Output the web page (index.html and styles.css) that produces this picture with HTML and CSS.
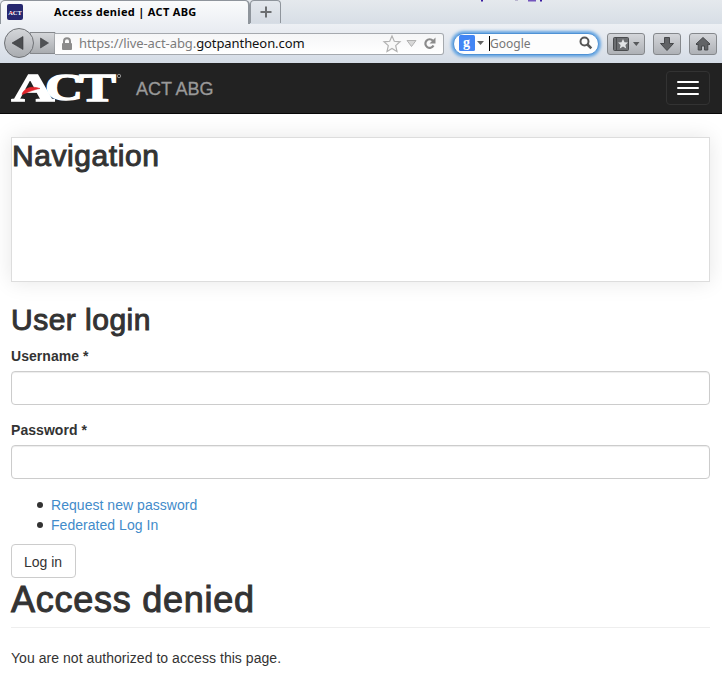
FILE: index.html
```html
<!DOCTYPE html>
<html lang="en">
<head>
<meta charset="utf-8">
<title>Access denied | ACT ABG</title>
<link rel="stylesheet" href="styles.css">
</head>
<body>
<div class="browser">
  <div class="tabs">
    <div class="tab">
      <svg class="favicon" width="16" height="16" viewBox="0 0 16 16"><rect width="16" height="16" rx="2" fill="#26286f"/><text x="1.2" y="10.500" textLength="13.6" lengthAdjust="spacingAndGlyphs" class="logo-text" font-size="7">ACT</text><path d="M3 9l3-.6" stroke="#e33" stroke-width=".8"/></svg>
      <span class="tab-title">Access denied | ACT ABG</span>
    </div>
    <div class="newtab"><svg width="12" height="12" viewBox="0 0 12 12"><path d="M6 .5v11M.5 6h11" stroke="#6c6e71" stroke-width="2"/></svg></div>
    <svg class="scraps" width="70" height="3" viewBox="0 0 70 3"><path d="M1 0h2v1.500h-2zM60 0h2v1.500h-2z" fill="#3a1ba0"/><path d="M35 0h3v1h-3z" fill="#b9b5ce"/><path d="M48 0h8v1.500h-8z" fill="#7355bd"/></svg>
  </div>
  <div class="toolbar">
    <div class="history">
      <svg width="52" height="32" viewBox="0 0 52 32">
        <defs><linearGradient id="g" x1="0" y1="0" x2="0" y2="1"><stop offset="0" stop-color="#d5d7da"/><stop offset="1" stop-color="#a8abaf"/></linearGradient></defs>
        <path d="M26 5.500h25v21H26z" fill="url(#g)" stroke="#85888c"/>
        <circle cx="15" cy="16" r="14.500" fill="url(#g)" stroke="#6f7276"/>
        <path d="M8 16l11-6.500v13z" fill="#4b4d50" stroke="#36383b" stroke-width=".6"/>
        <path d="M36.500 11l8 5-8 5z" fill="#505255" stroke="#3c3e41" stroke-width=".6"/>
      </svg>
    </div>
    <div class="urlbar">
      <svg class="lock" width="12" height="14" viewBox="0 0 12 14"><path d="M3 7V4.200a3 3 0 0 1 6 0V7" fill="none" stroke="#8b8b8b" stroke-width="2"/><rect x="1" y="6" width="10" height="7" rx="1" fill="#8b8b8b"/></svg>
      <span class="url">https://live-act-abg.<b>gotpantheon.com</b></span>
      <svg class="url-icons" width="54" height="20" viewBox="0 0 54 20">
        <path d="M9 2l2.300 5.300 5.700.5-4.300 3.800 1.300 5.800-5-3-5 3 1.300-5.800L1 7.800l5.700-.5z" fill="#f8f8f8" stroke="#b1b1b1" stroke-width="1.200"/>
        <path d="M24 6.500h9l-4.500 6z" fill="#d8d8d8" stroke="#b1b1b1"/>
        <path d="M50.500 11.500a4.300 4.300 0 1 1-.6-4.800" fill="none" stroke="#8b8b8b" stroke-width="2.200"/><path d="M52.500 3.500v6h-6z" fill="#8b8b8b"/>
      </svg>
    </div>
    <div class="search">
      <svg class="engine" width="16" height="16" viewBox="0 0 16 16"><rect width="16" height="16" rx="1.500" fill="#4285f4"/><text x="4" y="11.500" class="g-text">g</text></svg>
      <svg class="drop" width="7" height="4" viewBox="0 0 7 4"><path d="M0 0h7L3.500 4z" fill="#606060"/></svg>
      <span class="placeholder">Google</span>
      <svg class="lens" width="14" height="14" viewBox="0 0 14 14"><circle cx="5.500" cy="5.500" r="4" fill="none" stroke="#565656" stroke-width="2"/><path d="M8.500 8.500l3.800 3.800" stroke="#565656" stroke-width="2.600"/></svg>
    </div>
    <div class="tool wide"><svg width="27" height="16" viewBox="0 0 27 16"><rect x=".5" y="1.500" width="15" height="13" rx="1" fill="#6c6e71" stroke="#494b4e"/><path d="M3.500 2v12" stroke="#494b4e"/><path d="M10 3l1.500 3.200 3.500.4-2.600 2.300.8 3.500L10 10.600l-3.200 1.800.8-3.500L5 6.600l3.500-.4z" fill="#e2e4e6"/><path d="M20 6h6.500l-3.200 4z" fill="#57595c"/></svg></div>
    <div class="tool"><svg width="16" height="16" viewBox="0 0 16 16"><path d="M5.500 1.500h5v6h4L8 14.500 1.500 7.500h4z" fill="#616366" stroke="#46484b"/></svg></div>
    <div class="tool"><svg width="16" height="16" viewBox="0 0 16 16"><path d="M8 1.500L15 8l-1 1-1.200-1v6H9.500v-4h-3v4H3.200V8L2 9 1 8z" fill="#616366" stroke="#46484b"/></svg></div>
  </div>
</div>
<nav class="navbar">
  <svg class="logo" width="112" height="32" viewBox="0 0 112 32">
    <g stroke="#fff" stroke-width="1.300">
    <text x="0.500" y="28.500" textLength="43" lengthAdjust="spacingAndGlyphs" class="logo-text" font-size="39">A</text>
    <text x="34" y="28.300" textLength="38" lengthAdjust="spacingAndGlyphs" class="logo-text" font-size="38">C</text>
    <text x="68" y="28.500" textLength="37" lengthAdjust="spacingAndGlyphs" class="logo-text" font-size="40">T</text>
    </g>
    <path d="M11 22.500C13 16 20 13.500 29 16.500C21 18 17 20.500 11 22.500z" fill="#e1252b" stroke="#e1252b" stroke-width=".6"/>
    <circle cx="108" cy="4" r="1.700" fill="none" stroke="#aaa" stroke-width=".8"/>
  </svg>
  <span class="brand">ACT ABG</span>
  <button class="toggle" aria-label="Menu"><i></i><i></i><i></i></button>
</nav>
<main>
  <section class="nav-box"><h2 class="h-nav">Navigation</h2></section>
  <h2 class="h-login">User login</h2>
  <form>
    <label for="u">Username *</label>
    <input id="u" type="text">
    <label for="p">Password *</label>
    <input id="p" type="password">
    <ul>
      <li><a>Request new password</a></li>
      <li><a>Federated Log In</a></li>
    </ul>
    <button class="submit" type="button">Log in</button>
  </form>
  <h1>Access denied</h1>
  <p>You are not authorized to access this page.</p>
</main>
</body>
</html>
```
FILE: styles.css
```css
* { box-sizing: border-box; }
body { margin: 0; background: #fff; color: #333; font: 14px/20px "Liberation Sans", Arial, sans-serif; overflow: hidden; height: 678px; }
svg { display: block; flex: none; overflow: visible; }
.browser { height: 63px; background: #dce2ea; font-family: "Noto Sans", sans-serif; }
.tabs { height: 24px; display: flex; background: linear-gradient(#e5e9ed, #d7dee6); }
.tab { width: 250px; height: 24px; display: flex; align-items: center; padding: 0 0 2px 6px; border: 1px solid #8f959c; border-width: 1px 2px 0 1px; border-radius: 5px 5px 0 0; background: linear-gradient(#fafbfc, #edf0f4); }
.tab-title { margin-left: 31px; color: #000; font-size: 11px; font-weight: 700; line-height: 16px; letter-spacing: 0.32px; white-space: nowrap; }
.newtab { width: 31px; height: 23px; display: flex; align-items: center; justify-content: center; border: 1px solid #8f959c; border-bottom: 0; border-radius: 4px 4px 0 0; background: linear-gradient(#e4e8ed, #d5dbe3); }
.scraps { margin-left: 199px; }
.toolbar { height: 39px; display: flex; align-items: center; padding: 0 5px 0 4px; background: linear-gradient(#edf0f4, #d5dce6); }
.history { width: 51px; margin-top: -1px; }
.urlbar { width: 389px; height: 22px; display: flex; align-items: center; padding: 0 6px; border: 1px solid #a5a9ae; border-left: 0; border-radius: 0 3px 3px 0; background: linear-gradient(#f5f6f7, #fff); }
.url { margin: -2px 0 0 6px; color: #7c7c7c; font-size: 13px; line-height: 18px; letter-spacing: -0.08px; white-space: nowrap; }
.url b { font-weight: 400; color: #111; }
.url-icons { margin-left: auto; }
.search { width: 146px; height: 22px; margin-left: 9px; display: flex; align-items: center; padding: 0 5px; border: 1px solid #4f92d5; border-radius: 11px; background: #fdfdfd; box-shadow: 0 0 3px 2px #65a5e2; }
.engine { margin-top: -1px; }
.drop { margin: -1px 0 0 2px; }
.placeholder { margin-left: 5px; border-left: 1px solid #000; color: #777; font-size: 12px; line-height: 15px; }
.lens { margin: -2px 0 0 auto; }
.g-text { font: 700 14px "Liberation Serif", serif; fill: #fff; }
.tool { width: 28px; height: 22px; margin-left: 8px; display: flex; align-items: center; justify-content: center; border: 1px solid #85888c; border-radius: 3px; background: linear-gradient(#d4d6da, #aeb1b6); }
.wide { width: 38px; }
.logo-text { font-family: "Liberation Serif", serif; font-weight: 700; fill: #fff; }
.navbar { height: 51px; display: flex; align-items: flex-start; padding: 8px 12px 0 11px; background: #222; border-bottom: 1px solid #080808; }
.logo { margin-top: 1px; }
.brand { margin: 8px 0 0 13px; color: #999; font-size: 18px; line-height: 20px; letter-spacing: -0.05px; -webkit-text-stroke: 0.3px #999; }
.toggle { width: 44px; height: 34px; margin-left: auto; display: flex; flex-direction: column; gap: 4px; padding: 9px 10px; background: transparent; border: 1px solid #333; border-radius: 4px; }
.toggle i { width: 22px; height: 2px; border-radius: 1px; background: #fff; }
main { padding: 23px 12px 0 11px; }
h1, h2 { margin: 0; font-weight: 400; line-height: 1.1; -webkit-text-stroke: 1px #333; }
h2 { font-size: 30px; letter-spacing: 0.58px; }
.nav-box { height: 145px; padding: 1px 0 0; border: 1px solid #ddd; box-shadow: 0 0 20px rgba(0, 0, 0, 0.1); }
.h-login { margin: 21px 0 10px; letter-spacing: 0.48px; }
label { display: block; margin-bottom: 5px; font-weight: 700; letter-spacing: 0.05px; }
input { display: block; width: 100%; height: 34px; margin: 0 0 15px; border: 1px solid #ccc; border-radius: 4px; box-shadow: inset 0 1px 1px rgba(0, 0, 0, 0.075); }
ul { margin: 16px 0 9px; padding-left: 26px; list-style: none; }
li { height: 20px; display: flex; align-items: center; gap: 8px; letter-spacing: 0.04px; }
li::before { content: ""; width: 6px; height: 6px; border-radius: 50%; background: #333; }
a { color: #428bca; }
.submit { display: block; width: 65px; height: 34px; padding: 1px 1px 0 0; border: 1px solid #ccc; border-radius: 4px; background: #fff; color: #333; font: inherit; }
h1 { height: 48px; margin: 2px 0 20px; font-size: 36px; letter-spacing: 0.75px; border-bottom: 1px solid #eee; }
p { margin: 0; letter-spacing: 0.05px; }
```
